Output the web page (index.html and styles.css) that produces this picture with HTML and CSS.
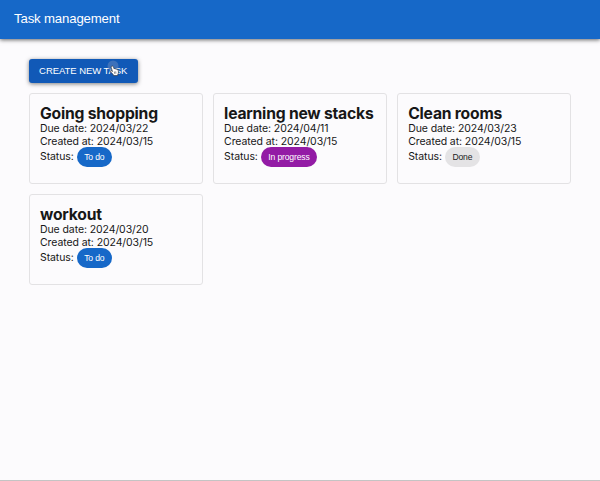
FILE: index.html
```html
<!DOCTYPE html>
<html lang="en">
<head>
<meta charset="utf-8">
<title>Task management</title>
<link rel="stylesheet" href="styles.css">
</head>
<body>
<header class="appbar">Task management</header>
<main class="content">
  <button class="create">CREATE NEW TASK
    <svg class="pointer" width="14" height="17" viewBox="0 0 14 17"><circle cx="6" cy="6" r="5.5" fill="#8095bd" opacity=".4"/><path d="M4.800 6.200c1-.5 1.500.3 1.900 1.500l.4 1.200c.5-.5 1-.4 1.400.2.5-.4 1-.2 1.300.4.8-.2 1.300.3 1.400 1.100.3 1.500.4 2.400-.3 3.600l-.3 1.400H6.700L6 14.300 3.700 11.900c-.7-.8.3-1.600 1.200-.8l.6.4-1.300-4.100c-.1-.6.1-1 .6-1.200z" fill="#fff" stroke="#222" stroke-width=".6"/><path d="M7.300 11.500l.4 2.300m1-2.400.2 2.300" stroke="#222" stroke-width=".5"/></svg>
  </button>
  <section class="grid">
    <article class="card"><h2>Going shopping</h2><p>Due date: 2024/03/22</p><p>Created at: 2024/03/15</p><div class="status">Status: <span class="chip todo">To do</span></div></article>
    <article class="card"><h2>learning new stacks</h2><p>Due date: 2024/04/11</p><p>Created at: 2024/03/15</p><div class="status">Status: <span class="chip progress">In progress</span></div></article>
    <article class="card"><h2>Clean rooms</h2><p>Due date: 2024/03/23</p><p>Created at: 2024/03/15</p><div class="status">Status: <span class="chip done">Done</span></div></article>
    <article class="card"><h2>workout</h2><p>Due date: 2024/03/20</p><p>Created at: 2024/03/15</p><div class="status">Status: <span class="chip todo">To do</span></div></article>
  </section>
</main>
</body>
</html>
```
FILE: styles.css
```css
* { box-sizing: border-box; }
body { margin: 0; height: 481px; overflow: hidden; display: flex; flex-direction: column; background: #fcfbfd; color: #171717; font: 10.5px/12.5px Inter, sans-serif; letter-spacing: -.09px; border-bottom: 1px solid #c4c4c4; }
.appbar { height: 39px; padding: 0 14px; flex: none; background: #1668c8; color: #fff; font: 13.2px/38px "Liberation Sans", sans-serif; letter-spacing: -.15px; box-shadow: 0 1px 4px rgba(0,0,0,.6); }
.content { padding: 20px 29px; }
.create { position: relative; display: block; width: 108.500px; height: 24px; margin: 0 0 10px; padding: 0; border: 0; border-radius: 3px; background: #1159b7; color: #fff; font: 9.500px/24px "Liberation Sans", sans-serif; letter-spacing: -.06px; white-space: nowrap; box-shadow: 0 1px 4px rgba(0,0,0,.5); }
.pointer { position: absolute; left: 78px; top: 1px; }
.grid { display: grid; grid-template-columns: repeat(3, 174.300px); grid-auto-rows: 91px; gap: 10px 9.800px; }
.card { padding: 11px 10px; border: 1px solid #e3e2e4; border-radius: 3px; }
.card h2 { margin: 0; font-size: 15.700px; line-height: 18px; font-weight: 700; letter-spacing: -.22px; white-space: nowrap; }
.card p { margin: 0; }
.status { display: flex; align-items: center; gap: 3px; height: 20px; margin-top: -.6px; }
.chip { height: 20px; padding: 0 7.500px; border-radius: 10px; font: 8.600px/20px "Liberation Sans", sans-serif; letter-spacing: -.15px; }
.todo { background: #1668c8; color: #fff; }
.progress { background: #931ba5; color: #fff; }
.done { background: #e4e3e5; color: #222; }
```
